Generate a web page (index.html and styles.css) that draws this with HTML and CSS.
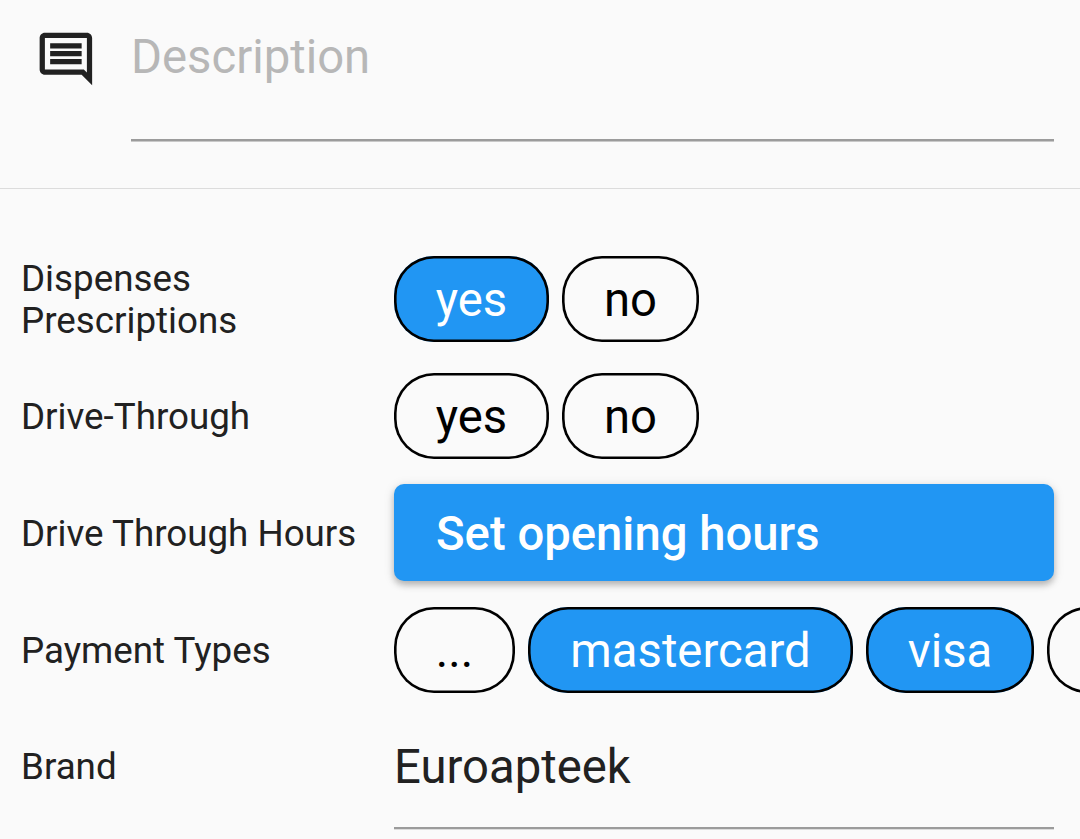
FILE: index.html
```html
<!DOCTYPE html>
<html lang="en">
<head>
<meta charset="utf-8">
<title>Place details</title>
<link rel="stylesheet" href="styles.css">
</head>
<body>
<section class="description">
  <svg class="icon" viewBox="0 0 24 24" fill="currentColor"><path transform="translate(.15 .15)" d="M21.99 4c0-1.100-.89-2-1.990-2H4c-1.100 0-2 .9-2 2v12c0 1.100.9 2 2 2h14l4 4-.010-18zM20 4v13.170l-1.170-1.170H4V4h16zM6 12h12v2H6zm0-3h12v2H6zm0-3h12v2H6z"/></svg>
  <div class="description-field"><span class="placeholder">Description</span></div>
</section>
<main class="tags">
  <div class="row">
    <div class="label">Dispenses<br>Prescriptions</div>
    <div class="chips"><span class="chip yes on">yes</span><span class="chip no">no</span></div>
  </div>
  <div class="row">
    <div class="label">Drive-Through</div>
    <div class="chips"><span class="chip yes">yes</span><span class="chip no">no</span></div>
  </div>
  <div class="row">
    <div class="label">Drive Through Hours</div>
    <div class="button">Set opening hours</div>
  </div>
  <div class="row">
    <div class="label">Payment Types</div>
    <div class="chips"><span class="chip more">...</span><span class="chip mastercard on">mastercard</span><span class="chip visa on">visa</span><span class="chip next"></span></div>
  </div>
  <div class="row">
    <div class="label brand-label">Brand</div>
    <div class="brand-field">Euroapteek</div>
  </div>
</main>
</body>
</html>
```
FILE: styles.css
```css
* { box-sizing: border-box; }
body {
  margin: 0;
  width: 1080px;
  height: 839px;
  overflow: hidden;
  background: #fafafa;
  color: #212121;
  font-family: Roboto, sans-serif;
}
.description {
  display: flex;
  height: 189px;
  padding: 27px 26px 0 34px;
  border-bottom: 1px solid #dcdcdc;
}
.icon { width: 63px; height: 63px; color: #212121; flex: none; }
.description-field {
  flex: 1;
  margin-left: 34px;
  height: 114px;
  border-bottom: 2px solid #9b9b9b;
  box-shadow: 0 1px 0 #c8c8c8;
}
.placeholder {
  display: block;
  font-size: 47.25px;
  line-height: 60px;
  color: #b7b7b7;
}
.tags { padding-top: 51px; }
.row { display: flex; align-items: center; height: 117px; padding-left: 21px; }
.label {
  flex: none;
  width: 373px;
  padding-top: 2px;
  font-size: 36.75px;
  line-height: 42px;
  white-space: nowrap;
}
.brand-label { padding-top: 0; }
.chips { display: flex; flex: 1; min-width: 0; gap: 13px; padding-top: 1px; overflow: hidden; }
.chip {
  display: flex;
  flex: none;
  justify-content: center;
  align-items: center;
  height: 86px;
  padding-top: 1px;
  border-radius: 40px;
  box-shadow: inset 0 0 0 2.6px #000;
  color: #000;
  font-size: 47.25px;
  line-height: 56px;
}
.on { background: #2196f3; color: #fff; }
.yes { width: 155px; }
.no { width: 137px; }
.more { width: 121px; }
.mastercard { width: 325px; }
.visa { width: 168px; }
.next { width: 160px; }
.button {
  display: flex;
  align-items: center;
  width: 660px;
  height: 97px;
  padding: 2px 0 0 42px;
  border-radius: 10px;
  background: #2196f3;
  color: #fff;
  font-size: 47.25px;
  font-weight: 500;
  box-shadow: 0 4px 6px rgba(0,0,0,.22), 0 2px 12px rgba(0,0,0,.12);
}
.brand-field {
  width: 660px;
  height: 124px;
  border-bottom: 2px solid #9b9b9b;
  box-shadow: 0 1px 0 #dcdcdc;
  font-size: 47.25px;
  line-height: 124px;
}
```
